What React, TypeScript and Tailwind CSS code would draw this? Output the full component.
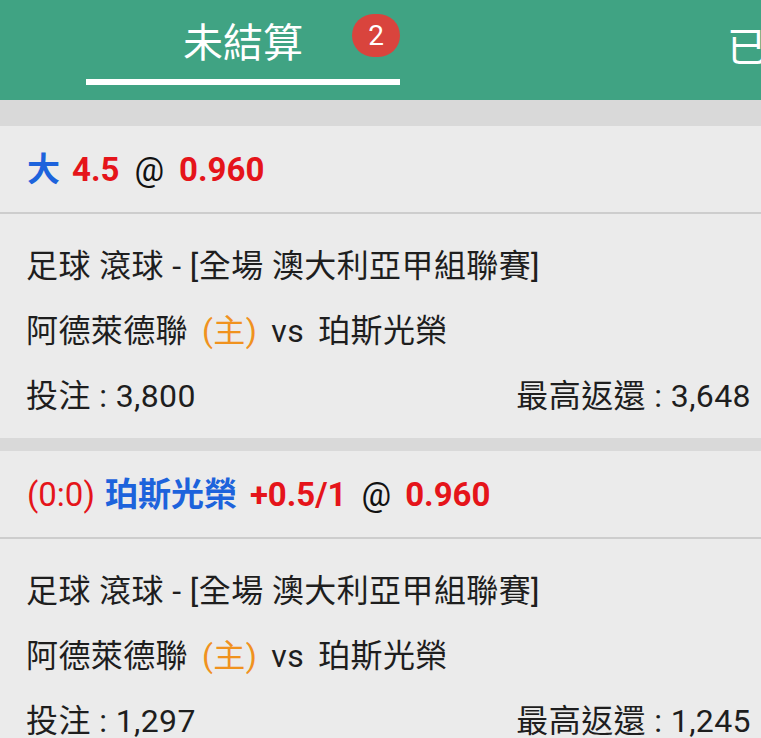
import React from "react";

const font = { fontFamily: "Roboto, 'Noto Sans CJK TC', sans-serif" };

function Card({ title, line1, amount, ret }: { title: React.ReactNode; line1: string; amount: string; ret: string }) {
  return (
    <div className="bg-[#ebebeb]">
      <div className="h-[88px] flex items-center pl-[27px] border-b-2 border-[#cdcdcd] text-[33px] leading-none">
        {title}
      </div>
      <div className="pt-[19px] pb-[10px] pl-[26px] pr-[10px] text-[32px] tracking-[0.4px] text-[#1e1e1e] leading-none">
        <div className="h-[65px] flex items-center">{line1}</div>
        <div className="h-[65px] flex items-center">
          <span>阿德萊德聯</span>
          <span className="text-[#f0921e] ml-[14px]">(主)</span>
          <span className="ml-[14px]">vs</span>
          <span className="ml-[14px]">珀斯光榮</span>
        </div>
        <div className="h-[65px] flex items-center justify-between">
          <span>投注 : {amount}</span>
          <span>最高返還 : {ret}</span>
        </div>
      </div>
    </div>
  );
}

export default function App() {
  return (
    <div style={font} className="w-[761px] h-[738px] overflow-hidden bg-[#d9d9d9]">
      <div className="h-[100px] bg-[#40a383] flex overflow-hidden">
        <div className="w-[486px] shrink-0 flex flex-col items-center pt-[18px] relative">
          <div className="text-white text-[40px] leading-[52px] h-[61px]">未結算</div>
          <div className="w-[314px] h-[6px] bg-white" />
          <div className="absolute left-[352px] top-[14px] w-[48px] h-[43px] rounded-full bg-[#d9443d] text-white text-[28px] flex items-center justify-center leading-none">
            2
          </div>
        </div>
        <div className="shrink-0 pl-[241px] pt-[22px] text-white text-[40px] leading-[52px] whitespace-nowrap">已結算</div>
      </div>
      <div className="h-[26px]" />
      <Card
        title={
          <div className="flex items-center font-bold">
            <span className="text-[#1d63dc]">大</span>
            <span className="text-[#e5141a] ml-[12px]">4.5</span>
            <span className="text-[#111] font-normal ml-[15px]">@</span>
            <span className="text-[#e5141a] ml-[15px]">0.960</span>
          </div>
        }
        line1="足球 滾球 - [全場 澳大利亞甲組聯賽]"
        amount="3,800"
        ret="3,648"
      />
      <div className="h-[13px]" />
      <Card
        title={
          <div className="flex items-center">
            <span className="text-[#e5141a]">(0:0)</span>
            <span className="text-[#1d63dc] font-bold ml-[10px]">珀斯光榮</span>
            <span className="text-[#e5141a] font-bold ml-[13px]">+0.5/1</span>
            <span className="text-[#111] ml-[15px]">@</span>
            <span className="text-[#e5141a] font-bold ml-[14px]">0.960</span>
          </div>
        }
        line1="足球 滾球 - [全場 澳大利亞甲組聯賽]"
        amount="1,297"
        ret="1,245"
      />
    </div>
  );
}
